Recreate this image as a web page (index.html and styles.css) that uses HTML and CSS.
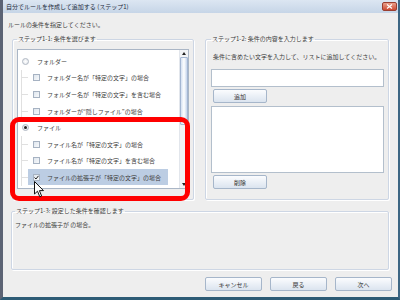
FILE: index.html
```html
<!DOCTYPE html>
<html lang="ja">
<head>
    <meta charset="UTF-8">
    <title>自分でルールを作成して追加する (ステップ1)</title>
    <link rel="stylesheet" href="styles.css">
</head>
<body>
    <div class="window">
        <div class="titlebar">
            <span>自分でルールを作成して追加する (ステップ1)</span>
            <span class="close">
                <svg width="7" height="5" viewBox="0 0 7 5"><path d="M1 0.5 L6 4.5 M6 0.5 L1 4.5" stroke="#fff" stroke-width="1.2"/></svg>
            </span>
        </div>

        <p class="intro">ルールの条件を指定してください。</p>

        <div class="steps">
            <fieldset class="step1">
                <legend>ステップ1-1: 条件を選びます</legend>
                <div class="listbox">
                    <div class="tree">
                        <div class="row parent"><span class="radio"></span>フォルダー</div>
                        <div class="children">
                            <div class="row"><span class="branch"></span><span class="item"><span class="check"></span>フォルダー名が「特定の文字」の場合</span></div>
                            <div class="row"><span class="branch"></span><span class="item"><span class="check"></span>フォルダー名が「特定の文字」を含む場合</span></div>
                            <div class="row"><span class="branch"></span><span class="item"><span class="check"></span>フォルダーが“隠しファイル”の場合</span></div>
                        </div>
                        <div class="row parent"><span class="radio on"></span>ファイル</div>
                        <div class="children">
                            <div class="row"><span class="branch"></span><span class="item"><span class="check"></span>ファイル名が「特定の文字」の場合</span></div>
                            <div class="row"><span class="branch"></span><span class="item"><span class="check"></span>ファイル名が「特定の文字」を含む場合</span></div>
                            <div class="row"><span class="branch"></span><span class="item selected"><span class="check on"><svg width="5" height="5" viewBox="0 0 5 5"><path d="M0.5 2.5 L2 4 L4.5 0.8" stroke="#222" stroke-width="1" fill="none"/></svg></span>ファイルの拡張子が「特定の文字」の場合</span></div>
                        </div>
                    </div>
                    <div class="scrollbar">
                        <span class="arrow"><span class="up"></span></span>
                        <span class="thumb"></span>
                        <span class="track"></span>
                        <span class="arrow"><span class="down"></span></span>
                    </div>
                </div>
            </fieldset>

            <fieldset class="step2">
                <legend>ステップ1-2: 条件の内容を入力します</legend>
                <p class="hint">条件に含めたい文字を入力して、リストに追加してください。</p>
                <div class="textbox"></div>
                <button class="btn small">追加</button>
                <div class="wordlist"></div>
                <button class="btn small">削除</button>
            </fieldset>
        </div>

        <fieldset class="step3">
            <legend>ステップ1-3: 設定した条件を確認します</legend>
            <p class="summary">ファイルの拡張子が の場合。</p>
        </fieldset>

        <div class="footer">
            <button class="btn">キャンセル</button>
            <button class="btn">戻る</button>
            <button class="btn">次へ</button>
        </div>

        <!-- annotation over the screenshot -->
        <div class="highlight"></div>
        <svg class="cursor" width="11" height="17" viewBox="0 0 11 17">
            <path d="M0.5 0.5 L0.5 13 L3.5 10.2 L5.8 15.8 L7.6 15 L5.4 9.6 L9.5 9.6 Z" fill="#fff" stroke="#111" stroke-width="1"/>
        </svg>
    </div>
</body>
</html>
```

FILE: styles.css
```css
body {
    margin: 0;
    font-family: "Noto Sans CJK JP", "Noto Sans", sans-serif;
    font-size: 6px;
    color: #3c3c3c;
}
.window {
    position: relative;
    width: 400px;
    height: 300px;
    box-sizing: border-box;
    border-left: 3px solid #5c6374;
    border-right: 2px solid #3d6683;
    border-bottom: 3px solid #2d5b75;
    background-color: #eeeeee;
}
.titlebar {
    height: 13px;
    padding-left: 3px;
    display: flex;
    align-items: center;
    justify-content: space-between;
    background: linear-gradient(#dce6f2, #c6d5e7);
    color: #1d2b3b;
    line-height: 8px;
}
.close {
    width: 15px;
    height: 9px;
    margin-right: 1px;
    box-sizing: border-box;
    border: 1px solid #9a3e30;
    border-radius: 2px;
    background: linear-gradient(#eaa08b, #cc4a33);
    display: flex;
    align-items: center;
    justify-content: center;
}
.intro {
    margin: 8px 0 0 5px;
    line-height: 8px;
}
.steps {
    display: flex;
    gap: 11px;
    margin: 6px 0 0 9px;
}
fieldset {
    margin: 0;
    padding: 0;
    border: 1px solid #cdd6e4;
    border-radius: 2px;
    box-shadow: inset 1px 1px 0 #fff, 1px 1px 0 #fff;
}
legend {
    padding: 0 1px;
    line-height: 8px;
}
.step1 {
    width: 182px;
    box-sizing: border-box;
    padding: 6px 4px 10px 4px;
}
.listbox {
    height: 140px;
    box-sizing: border-box;
    border: 1px solid #aab6c6;
    background-color: #fff;
    display: flex;
}
.tree {
    flex: 1;
    padding-top: 3px;
}
.row {
    height: 16.6px;
    display: flex;
    align-items: center;
    white-space: nowrap;
}
.parent {
    padding-left: 4px;
}
.radio {
    width: 7px;
    height: 7px;
    box-sizing: border-box;
    border: 1px solid #b0b8c3;
    border-radius: 50%;
    background: radial-gradient(#ffffff, #e2e6eb);
    margin-right: 8px;
    display: flex;
    align-items: center;
    justify-content: center;
}
.radio.on::after {
    content: "";
    width: 3px;
    height: 3px;
    border-radius: 50%;
    background-color: #222;
}
.children {
    margin-left: 3px;
    border-left: 1px solid #e0e0e0;
}
.branch {
    width: 6px;
    border-top: 1px solid #e0e0e0;
}
.item {
    height: 16px;
    display: flex;
    align-items: center;
    padding: 0 7px 0 5px;
}
.item.selected {
    background-color: #bccde3;
}
.check {
    width: 7px;
    height: 7px;
    box-sizing: border-box;
    border: 1px solid #a6b2c2;
    background: linear-gradient(135deg, #dfe6ee, #f7f9fb);
    margin-right: 7px;
    display: flex;
    align-items: center;
    justify-content: center;
}
.scrollbar {
    width: 8px;
    display: flex;
    flex-direction: column;
    background-color: #f1f3f6;
    border-left: 1px solid #e2e6ec;
}
.arrow {
    height: 7px;
    display: flex;
    align-items: center;
    justify-content: center;
}
.up {
    border-left: 2px solid transparent;
    border-right: 2px solid transparent;
    border-bottom: 3px solid #222;
}
.down {
    border-left: 2px solid transparent;
    border-right: 2px solid transparent;
    border-top: 3px solid #222;
}
.thumb {
    height: 68px;
    box-sizing: border-box;
    border: 1px solid #a4b6d2;
    border-radius: 1px;
    background: linear-gradient(90deg, #d4e0f2, #ffffff, #c4d4ec);
}
.track {
    flex: 1;
}
.step2 {
    width: 184px;
    box-sizing: border-box;
    padding: 0 4px 9px 5px;
}
.hint {
    margin: 10px 0 0 2px;
    line-height: 8px;
    white-space: nowrap;
}
.textbox {
    width: 173px;
    height: 18px;
    box-sizing: border-box;
    margin-top: 8px;
    border: 1px solid #b3bfcc;
    background-color: #fff;
}
.wordlist {
    width: 173px;
    height: 67px;
    box-sizing: border-box;
    margin-top: 3px;
    border: 1px solid #b3bfcc;
    background-color: #fff;
}
.btn {
    height: 14px;
    width: 57px;
    padding: 0;
    border: 1px solid #a6b6ca;
    border-radius: 2px;
    background: linear-gradient(#fbfcfe, #dbe4ef);
    font-family: inherit;
    font-size: 6px;
    color: #333;
    display: block;
}
.btn.small {
    width: 54px;
    margin: 2px 0 0 2px;
}
.step3 {
    width: 378px;
    box-sizing: border-box;
    margin: 7px 0 0 8px;
    padding: 6px 3px 40px 3px;
}
.summary {
    margin: 0;
    line-height: 8px;
}
.footer {
    display: flex;
    justify-content: flex-end;
    gap: 8px;
    margin-top: 7px;
    padding-right: 6px;
}
.highlight {
    position: absolute;
    left: 7px;
    top: 117px;
    width: 180px;
    height: 84px;
    box-sizing: border-box;
    border: 5px solid #ff0000;
    border-radius: 9px;
}
.cursor {
    position: absolute;
    left: 31px;
    top: 181px;
}
```
